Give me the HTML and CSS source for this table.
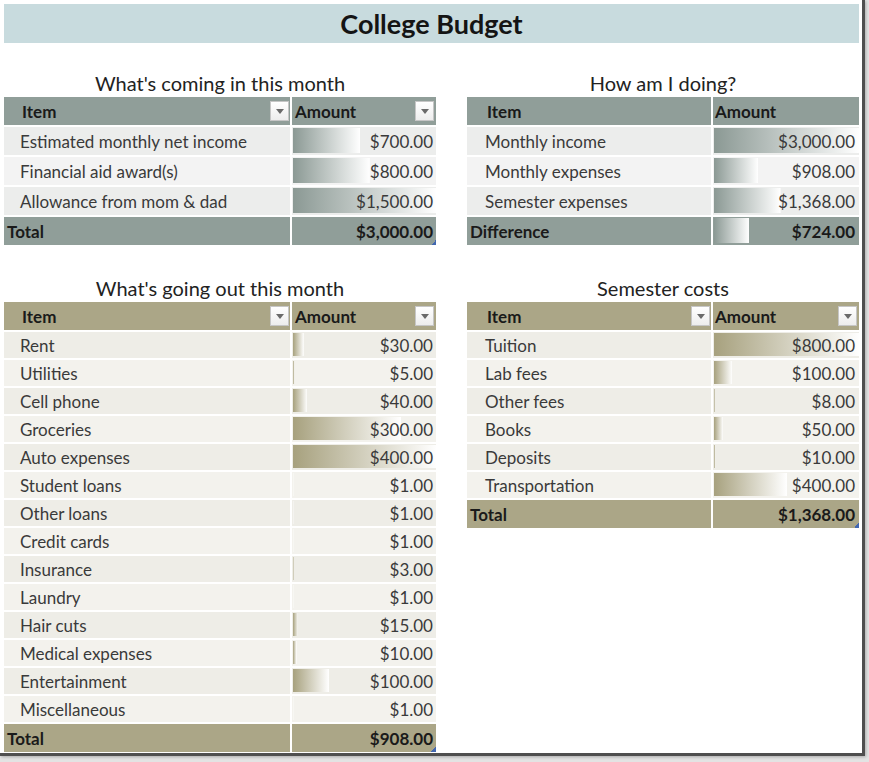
FILE: index.html
```html
<!DOCTYPE html>
<html lang="en">
<head>
<meta charset="utf-8">
<title>College Budget</title>
<link rel="stylesheet" href="styles.css">
</head>
<body>
<div class="frame">
  <div class="title">College Budget</div>
  <div class="grid">
    <section class="panel">
      <h2>What's coming in this month</h2>
      <div class="tbl l grey">
        <div class="hd"><span>Item</span><span class="dd"></span></div>
        <div class="hd amt"><span>Amount</span><span class="dd"></span></div>
        <div class="it">Estimated monthly net income</div>
        <div class="am" style="--w:46.67%">$700.00</div>
        <div class="it alt">Financial aid award(s)</div>
        <div class="am alt" style="--w:53.33%">$800.00</div>
        <div class="it">Allowance from mom &amp; dad</div>
        <div class="am" style="--w:100%">$1,500.00</div>
        <div class="tot">Total</div>
        <div class="tot am handle">$3,000.00</div>
      </div>
    </section>
    <section class="panel">
      <h2>How am I doing?</h2>
      <div class="tbl r grey">
        <div class="hd"><span>Item</span></div>
        <div class="hd amt"><span>Amount</span></div>
        <div class="it">Monthly income</div>
        <div class="am" style="--w:100%">$3,000.00</div>
        <div class="it alt">Monthly expenses</div>
        <div class="am alt" style="--w:30.27%">$908.00</div>
        <div class="it">Semester expenses</div>
        <div class="am" style="--w:45.6%">$1,368.00</div>
        <div class="tot">Difference</div>
        <div class="tot am" style="--w:24.13%">$724.00</div>
      </div>
    </section>
    <section class="panel">
      <h2>What's going out this month</h2>
      <div class="tbl l tan compact">
        <div class="hd"><span>Item</span><span class="dd"></span></div>
        <div class="hd amt"><span>Amount</span><span class="dd"></span></div>
        <div class="it">Rent</div><div class="am" style="--w:7.5%">$30.00</div>
        <div class="it alt">Utilities</div><div class="am alt" style="--w:1.25%">$5.00</div>
        <div class="it">Cell phone</div><div class="am" style="--w:10%">$40.00</div>
        <div class="it alt">Groceries</div><div class="am alt" style="--w:75%">$300.00</div>
        <div class="it">Auto expenses</div><div class="am" style="--w:100%">$400.00</div>
        <div class="it alt">Student loans</div><div class="am alt" style="--w:0.25%">$1.00</div>
        <div class="it">Other loans</div><div class="am" style="--w:0.25%">$1.00</div>
        <div class="it alt">Credit cards</div><div class="am alt" style="--w:0.25%">$1.00</div>
        <div class="it">Insurance</div><div class="am" style="--w:0.75%">$3.00</div>
        <div class="it alt">Laundry</div><div class="am alt" style="--w:0.25%">$1.00</div>
        <div class="it">Hair cuts</div><div class="am" style="--w:3.75%">$15.00</div>
        <div class="it alt">Medical expenses</div><div class="am alt" style="--w:2.5%">$10.00</div>
        <div class="it">Entertainment</div><div class="am" style="--w:25%">$100.00</div>
        <div class="it alt">Miscellaneous</div><div class="am alt" style="--w:0.25%">$1.00</div>
        <div class="tot">Total</div>
        <div class="tot am handle">$908.00</div>
      </div>
    </section>
    <section class="panel">
      <h2>Semester costs</h2>
      <div class="tbl r tan compact">
        <div class="hd"><span>Item</span><span class="dd"></span></div>
        <div class="hd amt"><span>Amount</span><span class="dd"></span></div>
        <div class="it">Tuition</div><div class="am" style="--w:100%">$800.00</div>
        <div class="it alt">Lab fees</div><div class="am alt" style="--w:12.5%">$100.00</div>
        <div class="it">Other fees</div><div class="am" style="--w:1%">$8.00</div>
        <div class="it alt">Books</div><div class="am alt" style="--w:6.25%">$50.00</div>
        <div class="it">Deposits</div><div class="am" style="--w:1.25%">$10.00</div>
        <div class="it alt">Transportation</div><div class="am alt" style="--w:50%">$400.00</div>
        <div class="tot">Total</div>
        <div class="tot am handle">$1,368.00</div>
      </div>
    </section>
  </div>
</div>
</body>
</html>
```
FILE: styles.css
```css
html, body {
  margin: 0;
  padding: 0;
}
body {
  background: #e3e3e3;
  font-family: Lato, "Open Sans", "Liberation Sans", sans-serif;
  width: 869px;
  height: 762px;
  overflow: hidden;
}
.frame {
  box-sizing: border-box;
  width: 865px;
  height: 756px;
  background: #fff;
  border-right: 3px solid #4f4f4f;
  border-bottom: 3px solid #4f4f4f;
  padding: 4px 3px 0 4px;
  box-shadow: 1px 1px 3px rgba(0, 0, 0, 0.25);
}
.title {
  height: 39px;
  background: #c8dbde;
  display: flex;
  align-items: center;
  justify-content: center;
  font-weight: 700;
  font-size: 27px;
  color: #141414;
}
.grid {
  display: grid;
  grid-template-columns: 432px 392px;
  column-gap: 31px;
  row-gap: 31px;
  margin-top: 28px;
}
h2 {
  margin: 0 0 2px;
  font-size: 20px;
  font-weight: 400;
  line-height: 24px;
  text-align: center;
  color: #222;
}
.tbl {
  display: grid;
  gap: 2px;
  font-size: 17px;
  color: #3a3a3a;
}
.tbl.l { grid-template-columns: 286px 144px; }
.tbl.r { grid-template-columns: 244px 146px; }
.grey {
  --hdr: #909e99;
  --row: #ecedec;
  --row2: #f3f3f3;
  --bar: #8b9994;
}
.tan {
  --hdr: #aba687;
  --row: #eeede7;
  --row2: #f3f2ed;
  --bar: #a7a17e;
}
.tbl > div {
  box-sizing: border-box;
  height: 28px;
  display: flex;
  align-items: center;
  white-space: nowrap;
}
.tbl.compact > .it,
.tbl.compact > .am:not(.tot) {
  height: 26px;
}
.hd {
  background: var(--hdr);
  font-weight: 700;
  color: #1a1a1a;
  justify-content: space-between;
  padding: 0 1px 0 18px;
}
.hd.amt { padding-left: 3px; padding-right: 2px; }
.r .hd { padding-left: 20px; }
.r .hd.amt { padding-left: 2px; }
.dd {
  box-sizing: border-box;
  width: 19px;
  height: 20px;
  background: linear-gradient(#ffffff, #ededed);
  border: 1px solid #c6c6c6;
  display: flex;
  align-items: center;
  justify-content: center;
}
.dd::before {
  content: "";
  border-left: 4px solid transparent;
  border-right: 4px solid transparent;
  border-top: 5px solid #6a6a6a;
}
.it {
  padding-left: 16px;
  background: var(--row);
}
.r .it { padding-left: 18px; }
.am {
  justify-content: flex-end;
  padding-right: 3px;
  background-color: var(--row);
  background-image: linear-gradient(to right, var(--bar), #ffffff);
  background-repeat: no-repeat;
  background-size: var(--w, 0%) calc(100% - 3px);
  background-position: 1px 1px;
}
.r .am { padding-right: 4px; }
.alt { background-color: var(--row2); }
.tot {
  background-color: var(--hdr);
  font-weight: 700;
  color: #1a1a1a;
  padding-left: 3px;
}
.tot.am { padding-left: 0; }
.tot.handle {
  background-image: linear-gradient(135deg, transparent 50%, #4267b0 50%);
  background-size: 5px 5px;
  background-position: right 0 bottom 0;
}
```
